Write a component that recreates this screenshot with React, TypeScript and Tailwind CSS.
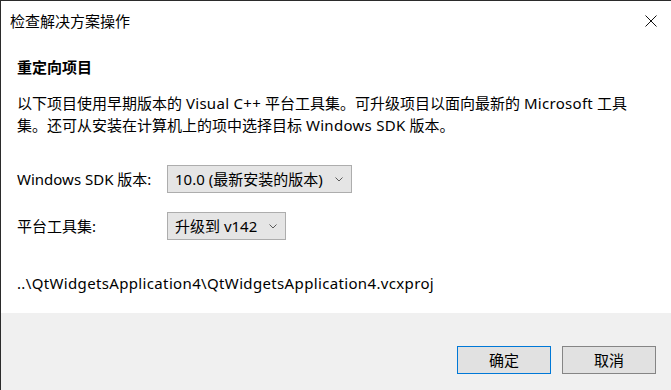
const font = { fontFamily: '"Noto Sans", "Noto Sans CJK SC", sans-serif' };

function Chevron() {
  return (
    <svg width="8" height="5" viewBox="0 0 8 5" className="shrink-0">
      <path d="M0.5 0.5 L4 4 L7.5 0.5" fill="none" stroke="#5a5a5a" strokeWidth="1" />
    </svg>
  );
}

function Combo({ label, value, width }: { label: string; value: string; width: string }) {
  return (
    <div className="flex items-center">
      <div className="w-[150px] text-[15px] leading-5">{label}</div>
      <div className={`flex h-[28px] items-center justify-between border border-[#adadad] bg-[#e5e5e5] pl-[7px] pr-[8px] text-[15px] ${width}`}>
        <span className="whitespace-nowrap">{value}</span>
        <Chevron />
      </div>
    </div>
  );
}

export default function App() {
  return (
    <div
      className="flex h-[390px] w-[671px] flex-col overflow-hidden border-l border-t border-[#2b2b2b] bg-white text-black"
      style={font}
    >
      <div className="flex h-[39px] shrink-0 items-center justify-between pl-[9px] pr-[14px]">
        <span className="text-[15px] leading-5">检查解决方案操作</span>
        <svg width="12" height="12" viewBox="0 0 12 12">
          <path d="M0.5 0.5 L11.5 11.5 M11.5 0.5 L0.5 11.5" stroke="#111" strokeWidth="1" />
        </svg>
      </div>

      <div className="flex-1 pl-4">
        <div className="mt-[17px] text-[15px] font-bold leading-5">重定向项目</div>
        <p className="mt-[15px] whitespace-nowrap text-[15px] leading-[22px]">
          以下项目使用早期版本的 <span className="tracking-[0.3px]">Visual C++</span> 平台工具集。可升级项目以面向最新的{" "}
          <span className="tracking-[0.3px]">Microsoft</span> 工具
          <br />
          集。还可从安装在计算机上的项中选择目标 <span className="tracking-[0.3px]">Windows SDK</span> 版本。
        </p>

        <div className="mt-[29px] flex flex-col gap-[19px]">
          <Combo label="Windows SDK 版本:" value="10.0 (最新安装的版本)" width="w-[185px]" />
          <Combo label="平台工具集:" value="升级到 v142" width="w-[119px]" />
        </div>

        <div className="mt-[33px] whitespace-nowrap text-[15px] leading-5 tracking-[0.35px]">
          ..\QtWidgetsApplication4\QtWidgetsApplication4.vcxproj
        </div>
      </div>

      <div className="flex h-[77px] shrink-0 justify-end gap-[11px] bg-[#f0f0f0] pr-[15px] pt-[33px]">
        <button className="h-[28px] w-[94px] border border-[#0078d7] bg-[#e1e1e1] text-[15px]">确定</button>
        <button className="h-[28px] w-[94px] border border-[#858585] bg-[#e1e1e1] text-[15px]">取消</button>
      </div>
    </div>
  );
}
